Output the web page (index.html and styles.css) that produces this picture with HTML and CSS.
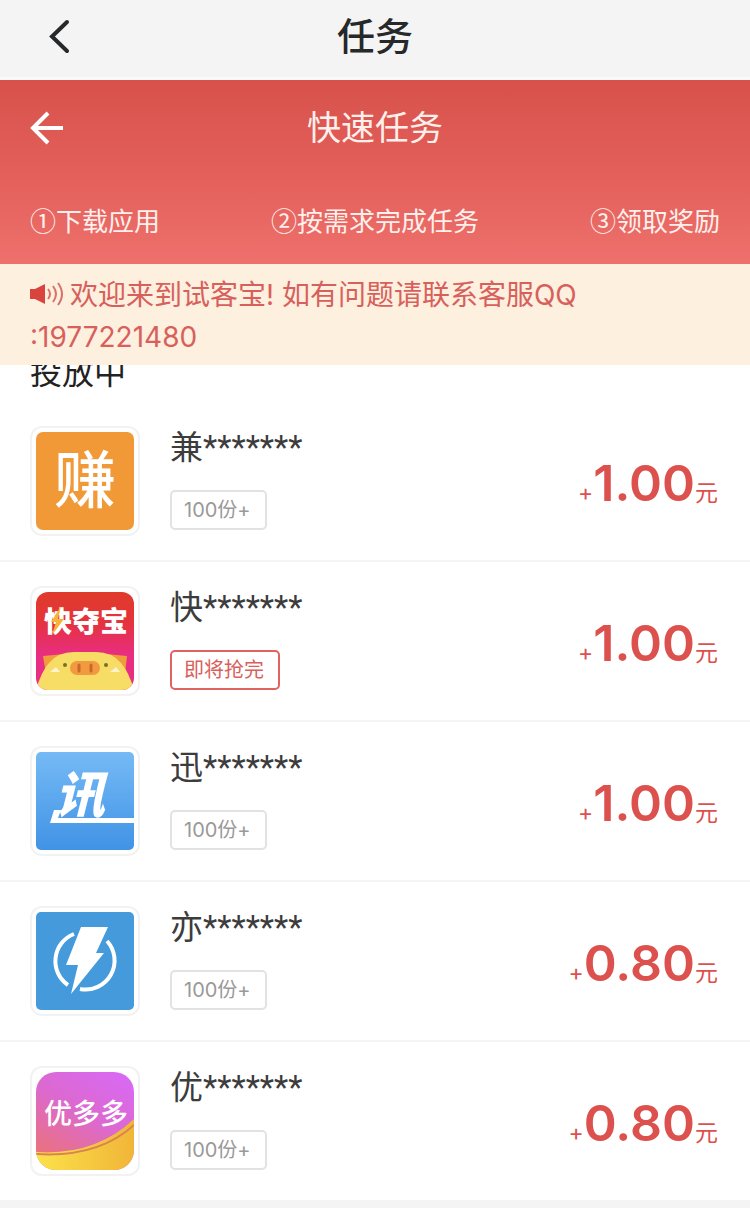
FILE: index.html
```html
<!DOCTYPE html>
<html lang="zh-CN">
<head>
<meta charset="utf-8">
<meta name="viewport" content="width=device-width, initial-scale=1">
<title>任务</title>
<link rel="stylesheet" href="styles.css">
</head>
<body>
<header class="app-bar">
  <button class="icon-button app-back" type="button" aria-label="返回">
    <svg width="22" height="36" viewBox="0 0 22 36"><path d="M19 4 4 18.500 19 33" fill="none" stroke="#262829" stroke-width="4" stroke-linecap="round"/></svg>
  </button>
  <h1 class="app-title">任务</h1>
</header>

<section class="hero">
  <div class="hero-bar">
    <button class="icon-button" type="button" aria-label="返回上一页">
      <svg width="36" height="36" viewBox="0 0 36 36"><path d="M18 3 3 18 18 33M4 18H33" fill="none" stroke="#fff" stroke-width="4"/></svg>
    </button>
    <h2 class="hero-title">快速任务</h2>
  </div>
  <ol class="steps">
    <li>①下载应用</li>
    <li>②按需求完成任务</li>
    <li>③领取奖励</li>
  </ol>
</section>

<p class="notice">
  <svg class="speaker" width="34" height="26" viewBox="0 0 34 26"><path d="M0 8H5L15 3V23L5 18H0Z" fill="#d9443f"/><path d="M18 8Q22 13 18 18M23 5Q29 13 23 21M28 2Q36 13 28 24" fill="none" stroke="#d9706a" stroke-width="2"/></svg>欢迎来到试客宝! 如有问题请联系客服QQ<br>:1977221480
</p>

<main class="feed">
  <h3 class="feed-title">投放中</h3>
  <ul class="tasks">
    <li class="task">
      <span class="logo">
        <svg viewBox="0 0 98 98"><rect width="98" height="98" rx="7" fill="#f19937"/><text class="logo-text" x="49" y="71" font-size="62" text-anchor="middle">赚</text></svg>
      </span>
      <div class="info"><h4 class="name">兼*******</h4><span class="tag">100份+</span></div>
      <p class="price"><span class="unit">+</span><strong>1.00</strong><span class="unit">元</span></p>
    </li>
    <li class="task">
      <span class="logo">
        <svg viewBox="0 0 98 98">
          <defs><linearGradient id="pink" x2="0" y2="1"><stop stop-color="#df3b2b"/><stop offset=".3" stop-color="#e5333b"/><stop offset=".65" stop-color="#e82d83"/></linearGradient><clipPath id="round"><rect width="98" height="98" rx="12"/></clipPath></defs>
          <g clip-path="url(#round)"><rect width="98" height="98" fill="url(#pink)"/>
          <path d="M7 64 29 62 10 82ZM91 64 70 62 89 82Z" fill="#f09b3c"/>
          <path d="M0 98Q5 80 13 71Q22 60 38 60H60Q76 60 85 71Q93 80 98 98Z" fill="#f7dc65"/>
          <rect x="34" y="69" width="30" height="14" rx="7" fill="#f29a40"/>
          <path d="M43 73V79M55 73V79" stroke="#c96a2b" stroke-width="3" stroke-linecap="round"/>
          <circle cx="29" cy="73" r="2" fill="#77702c"/><circle cx="70" cy="73" r="2" fill="#77702c"/>
          <path d="M14 80 20 75 24 80ZM74 80 80 75 84 80Z" fill="#fff2cf"/></g>
          <text class="logo-text heavy" x="50" y="40" font-size="28" text-anchor="middle">快夺宝</text>
          <path d="M25 14 15 30H20L16 43 28 27H22Z" fill="#f7b437"/>
        </svg>
      </span>
      <div class="info"><h4 class="name">快*******</h4><span class="tag tag-hot">即将抢完</span></div>
      <p class="price"><span class="unit">+</span><strong>1.00</strong><span class="unit">元</span></p>
    </li>
    <li class="task">
      <span class="logo">
        <svg viewBox="0 0 98 98">
          <defs><linearGradient id="sky" x2="0" y2="1"><stop stop-color="#75baf5"/><stop offset="1" stop-color="#4193e6"/></linearGradient></defs>
          <rect width="98" height="98" rx="5" fill="url(#sky)"/>
          <text class="logo-text heavy slanted" x="44" y="61" font-size="50" text-anchor="middle">讯</text>
          <path d="M18 58 14 71H98V66H22L25 58Z" fill="#fff"/>
        </svg>
      </span>
      <div class="info"><h4 class="name">迅*******</h4><span class="tag">100份+</span></div>
      <p class="price"><span class="unit">+</span><strong>1.00</strong><span class="unit">元</span></p>
    </li>
    <li class="task">
      <span class="logo">
        <svg viewBox="0 0 98 98"><rect width="98" height="98" rx="5" fill="#459adb"/>
          <path d="M38 22A29 29 0 0 0 32 73M71 29A29 29 0 0 1 44 77" fill="none" stroke="#fff" stroke-width="4"/>
          <path d="M45 15H72L60 41H68L35 82 42 53H30Z" fill="#fff"/></svg>
      </span>
      <div class="info"><h4 class="name">亦*******</h4><span class="tag">100份+</span></div>
      <p class="price"><span class="unit">+</span><strong>0.80</strong><span class="unit">元</span></p>
    </li>
    <li class="task">
      <span class="logo">
        <svg viewBox="0 0 98 98">
          <defs><linearGradient id="violet" x1=".8" y1="0" x2=".2" y2="1"><stop stop-color="#d969f2"/><stop offset=".45" stop-color="#dc69cf"/><stop offset="1" stop-color="#ec7373"/></linearGradient><linearGradient id="gold"><stop stop-color="#fbe24b"/><stop offset="1" stop-color="#f1b538"/></linearGradient><clipPath id="soft"><rect width="98" height="98" rx="20"/></clipPath></defs>
          <g clip-path="url(#soft)"><rect width="98" height="98" fill="url(#violet)"/>
          <path d="M0 80Q59 84 98 47V98H0Z" fill="url(#gold)"/>
          <path d="M0 82Q62 86 98 53" fill="none" stroke="#d88550" stroke-width="2"/></g>
          <text class="logo-text" x="50" y="52" font-size="28" text-anchor="middle">优多多</text>
        </svg>
      </span>
      <div class="info"><h4 class="name">优*******</h4><span class="tag">100份+</span></div>
      <p class="price"><span class="unit">+</span><strong>0.80</strong><span class="unit">元</span></p>
    </li>
  </ul>
</main>
</body>
</html>
```

FILE: styles.css
```css
* {
  box-sizing: border-box;
}

body {
  margin: 0;
  background: #f4f4f4;
  color: #333;
  font-family: Inter, "Noto Sans CJK SC", sans-serif;
}

h1, h2, h3, h4, p, ol, ul {
  margin: 0;
  padding: 0;
  font-weight: 400;
}

ol, ul {
  list-style: none;
}

svg {
  display: block;
}

.icon-button {
  padding: 0;
  border: 0;
  background: none;
}

.app-bar,
.hero-bar {
  display: grid;
  grid-template-columns: 58px 1fr 58px;
  align-items: center;
  justify-items: start;
}

.app-bar {
  height: 80px;
  padding: 0 30px 5px;
  border-bottom: 3px solid #fafafa;
  background: #f4f4f4;
}

.app-back {
  justify-self: center;
}

.app-title {
  justify-self: center;
  color: #262829;
  font-size: 38px;
  font-weight: 500;
  line-height: 48px;
}

.hero {
  padding: 24px 30px;
  background: linear-gradient(#d8524b, #e35f5a 50%, #ee706c);
  color: #fff0ec;
}

.hero-title {
  justify-self: center;
  font-size: 34px;
  line-height: 48px;
}

.steps {
  display: flex;
  justify-content: space-between;
  margin-top: 48px;
  font-family: "Noto Sans CJK SC", sans-serif;
  font-size: 26px;
  line-height: 40px;
}

.notice {
  position: relative;
  z-index: 1;
  padding: 10px 30px 7px;
  background: #fdf0de;
  color: #d8605c;
  font-size: 28px;
  line-height: 42px;
}

.speaker {
  display: inline-block;
  margin-right: 6px;
  vertical-align: -2px;
}

.feed {
  overflow: hidden;
  background: #fff;
}

.feed-title {
  margin: -16px 30px 5px;
  color: #222;
  font-size: 32px;
  line-height: 48px;
}

.task {
  display: flex;
  align-items: center;
  height: 160px;
  padding: 0 32px 0 30px;
  border-bottom: 2px solid #f4f4f4;
}

.task:last-child {
  height: 158px;
  border-bottom: 0;
}

.logo {
  flex: none;
  width: 110px;
  padding: 4px;
  border: 2px solid #f2f2f2;
  border-radius: 12px;
}

.logo-text {
  fill: #fff;
  font-family: "Noto Sans CJK SC", sans-serif;
  font-weight: 500;
}

.heavy {
  font-weight: 900;
}

.slanted {
  font-style: italic;
}

.info {
  display: flex;
  flex: 1;
  flex-direction: column;
  align-items: flex-start;
  gap: 20px;
  height: 110px;
  margin-left: 30px;
}

.name {
  color: #3c3c3c;
  font-family: Roboto, "Noto Sans CJK SC", sans-serif;
  font-size: 33px;
  line-height: 44px;
}

.tag {
  padding: 0 14px 0 12px;
  border: 2px solid #e2e2e2;
  border-radius: 5px;
  color: #999;
  font-size: 20px;
  line-height: 36px;
}

.tag-hot {
  border-color: #e06360;
  color: #d8605c;
}

.price {
  padding-top: 4px;
  color: #dc504d;
  white-space: nowrap;
}

.price strong {
  font-size: 50px;
  font-weight: 600;
  line-height: 64px;
}

.unit {
  font-size: 23px;
}
```
